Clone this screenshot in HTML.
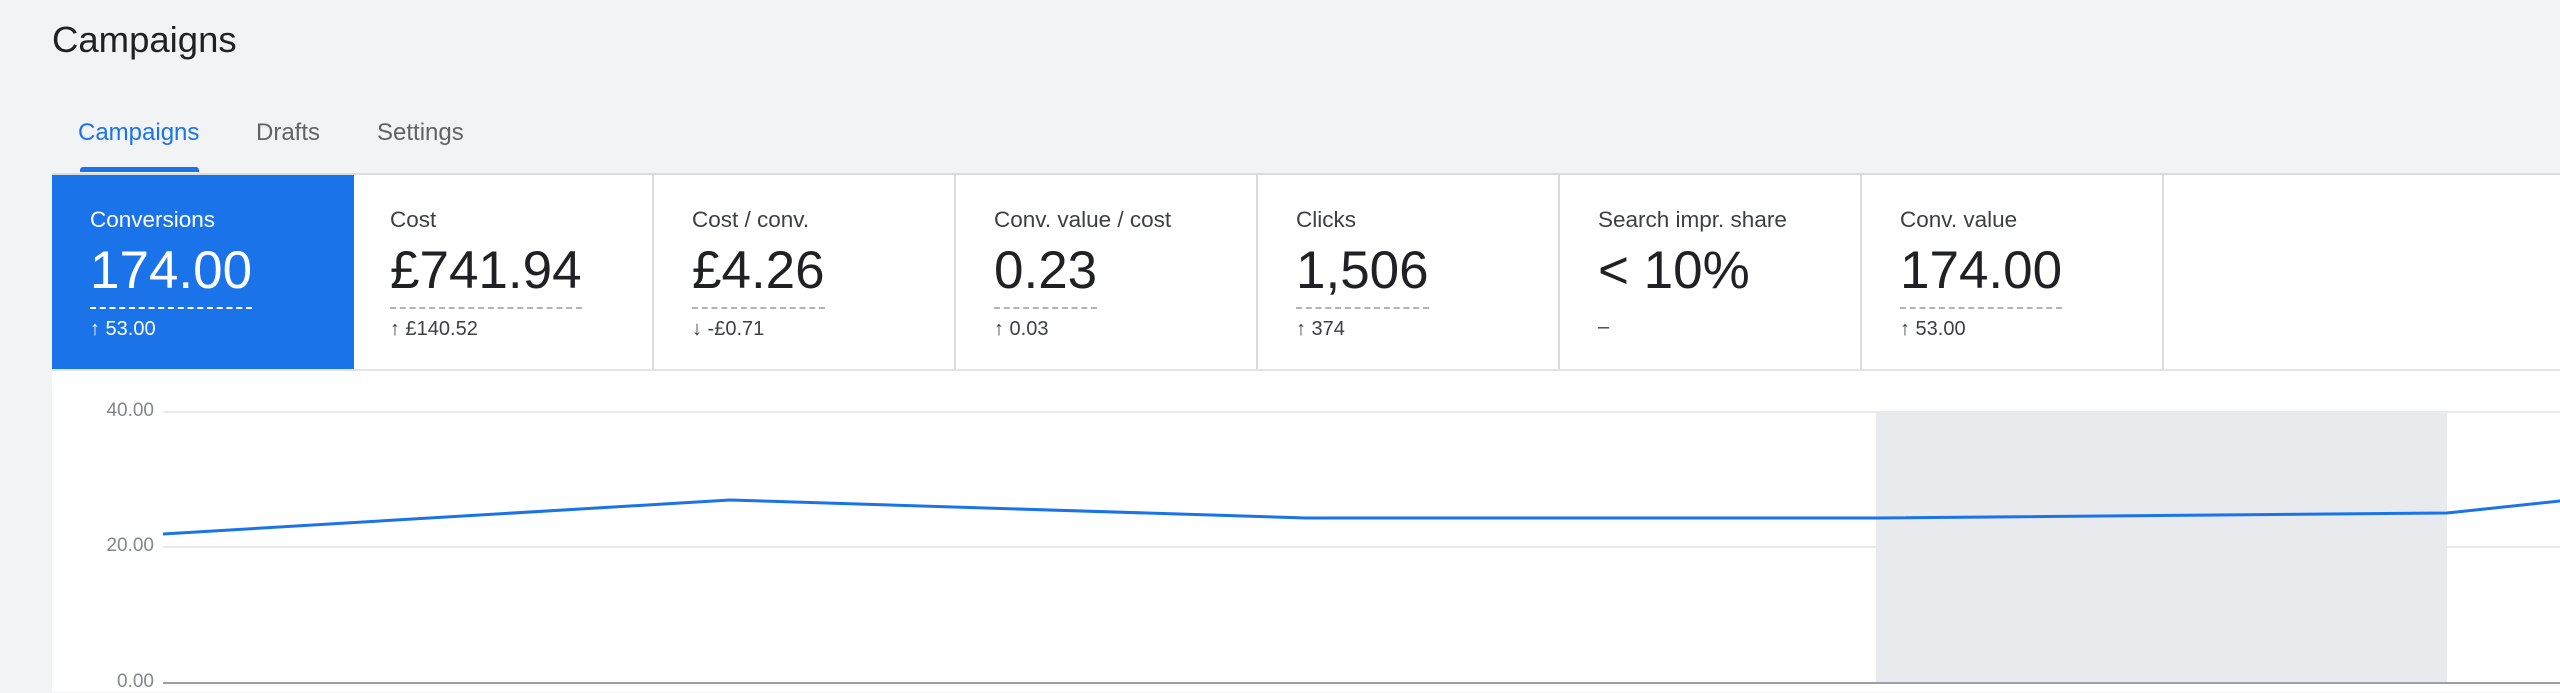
<!DOCTYPE html>
<html><head><meta charset="utf-8"><style>
*{margin:0;padding:0;box-sizing:border-box}
body{width:2560px;height:692px;overflow:hidden;background:#f1f3f4;font-family:"Liberation Sans",Arial,sans-serif;position:relative}
.t{position:absolute;left:52px;top:19px;font-size:36.5px;color:#202124}
.tab{position:absolute;top:119px;font-size:24px;color:#5f6368}
.ul{position:absolute;left:80px;top:167px;width:119px;height:5px;background:#1a73e8;border-radius:3px 3px 0 0}
.line{position:absolute;left:52px;top:173px;width:2508px;height:2px;background:#dadce0}
.panel{position:absolute;left:52px;top:175px;width:2508px;height:517px;background:#fff}
.row{position:absolute;left:52px;top:175px;height:196px;width:2508px;border-bottom:2px solid #e3e4e6}
.card{position:absolute;top:0;width:302px;height:194px;border-right:2px solid #dadce0;padding:32px 0 0 38px;color:#3c4043}
.card .l{font-size:22.5px;height:26px;line-height:26px}
.card .v{display:inline-block;font-size:53px;line-height:52px;margin-top:12px;padding-bottom:10px;border-bottom:2px dashed #b0b3b8;color:#202124}
.card .c{font-size:20px;margin-top:9px}
.card.sel{background:#1a73e8;color:#fff;border-right:none}
.card.sel .v{color:#fff;border-bottom-color:#fff}
.nb{border-bottom:none!important}
.ax{position:absolute;right:2406px;font-size:19px;color:#80868b}
</style></head><body>
<div class="t">Campaigns</div>
<div class="tab" style="left:78px;color:#1a73e8">Campaigns</div>
<div class="tab" style="left:256px">Drafts</div>
<div class="tab" style="left:377px">Settings</div>
<div class="ul"></div>
<div class="line"></div>
<div class="panel"></div>
<div class="row">
<div class="card sel" style="left:0"><div class="l">Conversions</div><div class="v">174.00</div><div class="c">↑ 53.00</div></div>
<div class="card" style="left:300px"><div class="l">Cost</div><div class="v">£741.94</div><div class="c">↑ £140.52</div></div>
<div class="card" style="left:602px"><div class="l">Cost / conv.</div><div class="v">£4.26</div><div class="c">↓ -£0.71</div></div>
<div class="card" style="left:904px"><div class="l">Conv. value / cost</div><div class="v">0.23</div><div class="c">↑ 0.03</div></div>
<div class="card" style="left:1206px"><div class="l">Clicks</div><div class="v">1,506</div><div class="c">↑ 374</div></div>
<div class="card" style="left:1508px"><div class="l">Search impr. share</div><div class="v nb">&lt; 10%</div><div class="c">–</div></div>
<div class="card" style="left:1810px"><div class="l">Conv. value</div><div class="v">174.00</div><div class="c">↑ 53.00</div></div>
</div>
<svg style="position:absolute;left:0;top:0" width="2560" height="692">
<rect x="1876" y="412" width="571" height="271" fill="#e8eaed"/>
<line x1="163" y1="412" x2="2560" y2="412" stroke="#e8eaed" stroke-width="2"/>
<line x1="163" y1="547" x2="2560" y2="547" stroke="#e8eaed" stroke-width="2"/>
<line x1="163" y1="683" x2="2560" y2="683" stroke="#9aa0a6" stroke-width="2"/>
<polyline points="163,534 730,500 1306,518 1878,518 2447,513 2560,501" fill="none" stroke="#1a73e8" stroke-width="3"/>
</svg>
<div class="ax" style="top:400px">40.00</div>
<div class="ax" style="top:535px">20.00</div>
<div class="ax" style="top:671px">0.00</div>
</body></html>
